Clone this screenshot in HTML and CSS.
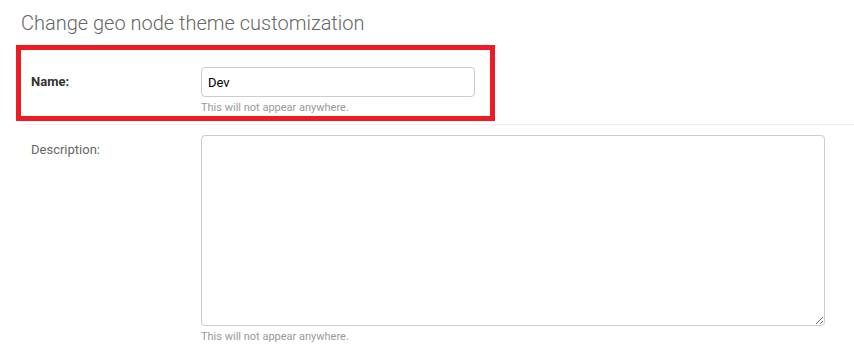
FILE: index.html
```html
<!DOCTYPE html>
<html lang="en">
<head>
    <meta charset="UTF-8">
    <meta name="viewport" content="width=device-width, initial-scale=1.0">
    <title>Change geo node theme customization</title>
    <link rel="stylesheet" href="styles.css">
</head>
<body>
    <div class="content">
        <h1>Change geo node theme customization</h1>

        <form class="change-form">
            <div class="form-row highlighted">
                <span class="marker"></span>
                <label class="required" for="id_name">Name:</label>
                <div class="field">
                    <input type="text" id="id_name" value="Dev">
                    <div class="help">This will not appear anywhere.</div>
                </div>
            </div>

            <div class="form-row">
                <label for="id_description">Description:</label>
                <div class="field">
                    <textarea id="id_description"></textarea>
                    <div class="help">This will not appear anywhere.</div>
                </div>
            </div>
        </form>
    </div>
</body>
</html>
```

FILE: styles.css
```css
* {
    margin: 0;
    padding: 0;
    box-sizing: border-box;
}

body {
    font-family: Roboto, 'Liberation Sans', sans-serif;
    font-size: 13px;
    color: #333;
    background: #fff;
}

.content {
    padding: 11px 0 0 21px;
}

h1 {
    font-size: 20px;
    font-weight: 300;
    line-height: 24px;
    color: #666;
    margin-bottom: 22px;
}

.form-row {
    position: relative;
    display: flex;
    padding: 10px;
    border-bottom: 1px solid #eee;
}

.form-row label {
    width: 170px;
    flex-shrink: 0;
    padding-top: 7px;
    line-height: 16px;
    color: #666;
}

.form-row label.required {
    font-weight: 700;
    color: #333;
}

.field input,
.field textarea {
    display: block;
    font-family: Roboto, 'Liberation Sans', sans-serif;
    font-size: 13px;
    color: #000;
    border: 1px solid #ccc;
    border-radius: 4px;
    padding: 5px 6px;
    background: #fff;
}

.field input {
    width: 274px;
    height: 30px;
}

.field textarea {
    width: 624px;
    height: 191px;
    margin-bottom: 3px;
}

.help {
    font-size: 11px;
    line-height: 13px;
    color: #999;
    margin-top: 4px;
}

.marker {
    position: absolute;
    left: -5px;
    top: -12px;
    width: 479px;
    height: 76px;
    border: 5px solid #ed1c24;
    pointer-events: none;
}
```
